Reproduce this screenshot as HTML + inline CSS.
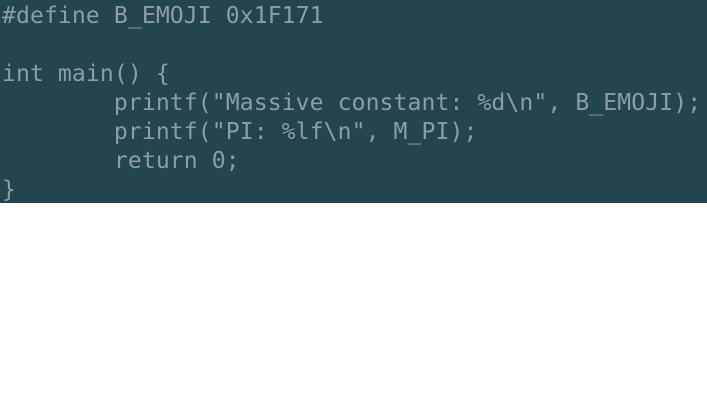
<!DOCTYPE html>
<html><head><style>
html,body{margin:0;padding:0;background:#fff;width:707px;height:416px;overflow:hidden}
pre{margin:0;width:705px;height:201px;background:#22454f;color:#8a9ea3;font-family:"DejaVu Sans Mono","Liberation Mono",monospace;font-size:23.1px;letter-spacing:0.08px;line-height:29px;padding:2px 0 0 2px;white-space:pre;overflow:hidden}
</style></head><body><pre>#define B_EMOJI 0x1F171

int main() {
        printf("Massive constant: %d\n", B_EMOJI);
        printf("PI: %lf\n", M_PI);
        return 0;
}</pre></body></html>
